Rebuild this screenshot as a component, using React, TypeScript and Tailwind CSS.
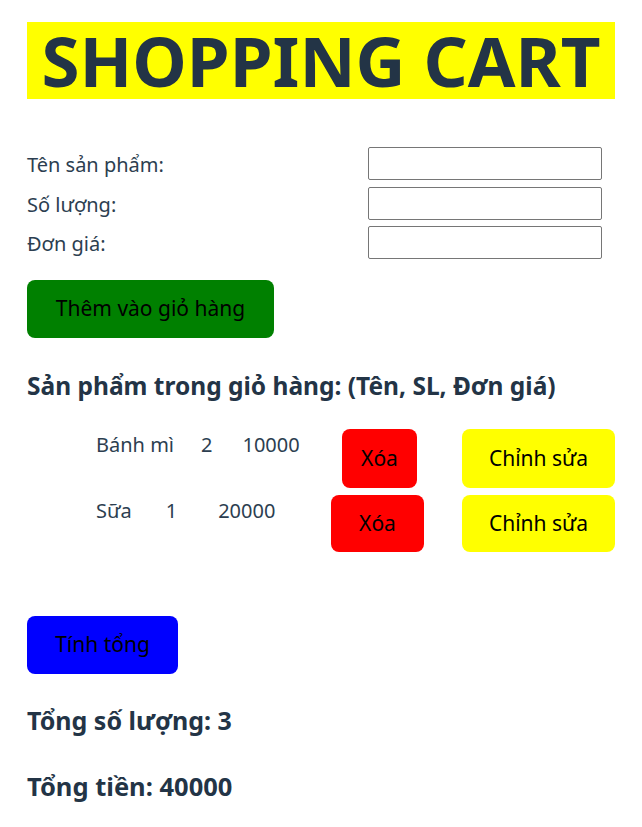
import React from "react";

const font = { fontFamily: '"Noto Sans", "Open Sans", sans-serif' };

export default function App() {
  return (
    <div className="min-h-screen bg-white px-[27px] pt-[22px] text-[#2c3e50]" style={font}>
      <h1 className="bg-[#ffff00] text-center text-[69px] font-bold leading-[77px] text-[#233446]">
        SHOPPING CART
      </h1>

      <div className="mt-[48px] flex flex-col gap-[6.5px] pr-[13px]">
        {["Tên sản phẩm:", "Số lượng:", "Đơn giá:"].map((l) => (
          <div key={l} className="flex h-[33px] items-center justify-between">
            <span className="mt-[3px] text-[20px]">{l}</span>
            <input className="h-[33px] w-[234px] rounded-[2px] border border-[#767676] bg-white" />
          </div>
        ))}
      </div>

      <button className="mt-[21px] h-[58px] w-[247px] rounded-[8px] bg-[#008000] text-[21px] text-black">
        Thêm vào giỏ hàng
      </button>

      <h2 className="mt-[30px] text-[24.5px] font-bold text-[#233446]">
        Sản phẩm trong giỏ hàng: (Tên, SL, Đơn giá)
      </h2>

      <div className="mt-[24px] flex flex-col gap-[7px] text-[20px]">
        <div className="flex items-start">
          <span className="ml-[69px] mt-[1px] flex w-[246px]">
            <span>Bánh mì</span>
            <span className="ml-[27px]">2</span>
            <span className="ml-[30px]">10000</span>
          </span>
          <button className="h-[59px] w-[75px] rounded-[8px] bg-[#ff0000] text-[21px] text-black">Xóa</button>
          <button className="ml-[45px] h-[59px] w-[153px] rounded-[8px] bg-[#ffff00] text-[21px] text-black">
            Chỉnh sửa
          </button>
        </div>
        <div className="flex items-start">
          <span className="ml-[69px] mt-[1px] flex w-[235px]">
            <span>Sữa</span>
            <span className="ml-[34px]">1</span>
            <span className="ml-[41px]">20000</span>
          </span>
          <button className="h-[57px] w-[93px] rounded-[8px] bg-[#ff0000] text-[21px] text-black">Xóa</button>
          <button className="ml-[38px] h-[57px] w-[153px] rounded-[8px] bg-[#ffff00] text-[21px] text-black">
            Chỉnh sửa
          </button>
        </div>
      </div>

      <button className="mt-[64px] h-[58px] w-[151px] rounded-[8px] bg-[#0000ff] text-[21px] text-black">
        Tính tổng
      </button>

      <p className="mt-[28px] text-[25px] font-bold text-[#233446]">Tổng số lượng: 3</p>
      <p className="mt-[28px] text-[25.5px] font-bold text-[#233446]">Tổng tiền: 40000</p>
    </div>
  );
}
